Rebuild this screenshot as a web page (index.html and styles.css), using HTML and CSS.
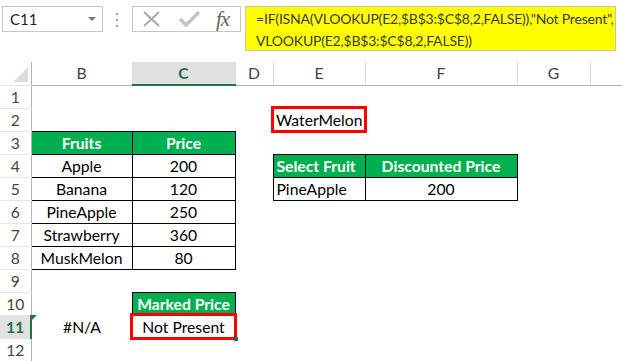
FILE: index.html
```html
<!DOCTYPE html>
<html lang="en">
<head>
	<meta charset="UTF-8">
	<title>VLOOKUP with ISNA</title>
	<link rel="stylesheet" href="styles.css">
</head>
<body>
	<div class="toolbar">
		<div class="namebox">
			<span>C11</span>
			<span class="caret"></span>
		</div>
		<div class="grip"><i></i><i></i><i></i></div>
		<div class="fxbtns">
			<svg class="ico" width="20" height="16" viewBox="0 0 20 16">
				<path d="M2 1 L17 15 M17 1 L2 15" stroke="#a9a9a9" stroke-width="2" fill="none"/>
			</svg>
			<svg class="ico" width="22" height="16" viewBox="0 0 22 16">
				<path d="M1 8 L7 14 L20 1" stroke="#c4c4c4" stroke-width="3.5" fill="none"/>
			</svg>
			<span class="fx">fx</span>
		</div>
		<div class="formula">=IF(ISNA(VLOOKUP(E2,$B$3:$C$8,2,FALSE)),"Not Present",<br>VLOOKUP(E2,$B$3:$C$8,2,FALSE))</div>
	</div>

	<table class="sheet">
		<colgroup>
			<col style="width:31px">
			<col style="width:101px">
			<col style="width:103px">
			<col style="width:38px">
			<col style="width:92px">
			<col style="width:152px">
			<col style="width:73px">
			<col style="width:32px">
		</colgroup>
		<tr class="colhead">
			<th class="corner"><span class="tri"></span></th>
			<th>B</th>
			<th class="sel">C</th>
			<th>D</th>
			<th>E</th>
			<th>F</th>
			<th>G</th>
			<th></th>
		</tr>
		<tr><th>1</th><td></td><td></td><td></td><td></td><td></td><td></td><td></td></tr>
		<tr><th>2</th><td></td><td></td><td></td><td class="redbox left">WaterMelon</td><td></td><td></td><td></td></tr>
		<tr><th>3</th><td class="head box">Fruits</td><td class="head box">Price</td><td></td><td></td><td></td><td></td><td></td></tr>
		<tr><th>4</th><td class="box">Apple</td><td class="box">200</td><td></td><td class="head box left">Select Fruit</td><td class="head box">Discounted Price</td><td></td><td></td></tr>
		<tr><th>5</th><td class="box">Banana</td><td class="box">120</td><td></td><td class="box left">PineApple</td><td class="box">200</td><td></td><td></td></tr>
		<tr><th>6</th><td class="box">PineApple</td><td class="box">250</td><td></td><td></td><td></td><td></td><td></td></tr>
		<tr><th>7</th><td class="box">Strawberry</td><td class="box">360</td><td></td><td></td><td></td><td></td><td></td></tr>
		<tr><th>8</th><td class="box">MuskMelon</td><td class="box">80</td><td></td><td></td><td></td><td></td><td></td></tr>
		<tr><th>9</th><td></td><td></td><td></td><td></td><td></td><td></td><td></td></tr>
		<tr><th>10</th><td></td><td class="head box">Marked Price</td><td></td><td></td><td></td><td></td><td></td></tr>
		<tr><th class="sel">11</th><td class="err">#N/A</td><td class="redbox active">Not Present</td><td></td><td></td><td></td><td></td><td></td></tr>
		<tr><th>12</th><td></td><td></td><td></td><td></td><td></td><td></td><td></td></tr>
	</table>
</body>
</html>
```

FILE: styles.css
```css
body {
	margin: 0;
	background-color: #fff;
	font-family: Lato, "Open Sans", sans-serif;
	font-size: 15.7px;
	color: #000;
	overflow: hidden;
}

/* formula bar */
.toolbar {
	display: flex;
	align-items: flex-start;
	height: 62px;
	padding-top: 6px;
	box-sizing: border-box;
}

.namebox {
	display: flex;
	align-items: center;
	justify-content: space-between;
	width: 101px;
	height: 26px;
	margin-left: 2px;
	padding: 0 6px 0 7px;
	box-sizing: border-box;
	border: 1px solid #c6c6c6;
	color: #222;
	font-size: 15px;
}

.caret {
	width: 0;
	height: 0;
	border-left: 4px solid transparent;
	border-right: 4px solid transparent;
	border-top: 4px solid #777;
}

.grip {
	display: flex;
	flex-direction: column;
	gap: 4px;
	width: 2px;
	margin: 7px 14px 0 13px;
}

.grip i {
	width: 2px;
	height: 2px;
	background-color: #a0a0a0;
}

.fxbtns {
	display: flex;
	align-items: center;
	gap: 17px;
	width: 109px;
	height: 26px;
	padding-left: 9px;
	box-sizing: border-box;
	border: 1px solid #c6c6c6;
}

.fx {
	font-family: "Liberation Serif", serif;
	font-style: italic;
	font-size: 21px;
	color: #666;
	margin-left: -2px;
	letter-spacing: -1px;
}

.formula {
	width: 371px;
	height: 45px;
	margin-left: 4px;
	padding: 1px 0 0 10px;
	box-sizing: border-box;
	background-color: #ffff00;
	border: 1px solid #c9c9a0;
	color: #3a3a3a;
	font-size: 14px;
	letter-spacing: -0.2px;
	line-height: 22px;
	white-space: nowrap;
}

/* sheet grid */
.sheet {
	border-collapse: collapse;
	table-layout: fixed;
	width: 622px;
}

.sheet tr {
	height: 23px;
}

.sheet td {
	padding: 0 3px;
	text-align: center;
	white-space: nowrap;
	position: relative;
}

.sheet th {
	font-weight: normal;
	color: #444;
	padding: 0;
	text-align: center;
}

.sheet tr > th:first-child {
	border-right: 1px solid #b4b4b4;
	border-bottom: 1px solid #e4e4e4;
}

.colhead {
	height: 22px;
}

.sheet .colhead th {
	border-bottom: 1px solid #b4b4b4;
	border-right: 1px solid #dadada;
}

.sheet .colhead th.sel {
	background-color: #e1e1e1;
	color: #217346;
	font-weight: bold;
	border-bottom: 2px solid #217346;
}

.sheet th.sel {
	background-color: #e1e1e1;
	color: #217346;
	font-weight: bold;
}

.sheet tr > th.sel:first-child {
	border-right: 2px solid #217346;
}

.corner {
	position: relative;
}

.tri {
	position: absolute;
	right: 3px;
	bottom: 3px;
	width: 0;
	height: 0;
	border-left: 15px solid transparent;
	border-bottom: 15px solid #dcdcdc;
}

.box {
	border: 1px solid #000;
}

.head {
	background-color: #00b050;
	color: #fff;
	font-weight: bold;
}

.left {
	text-align: left !important;
}

.redbox {
	outline: 3px solid #f00;
	outline-offset: -1px;
}

.err::before {
	content: "";
	position: absolute;
	left: 0;
	top: 0;
	border-top: 5px solid #1e7a3c;
	border-right: 5px solid transparent;
}

.active::after {
	content: "";
	position: absolute;
	right: -3px;
	bottom: -3px;
	width: 4px;
	height: 4px;
	background-color: #217346;
}
```
